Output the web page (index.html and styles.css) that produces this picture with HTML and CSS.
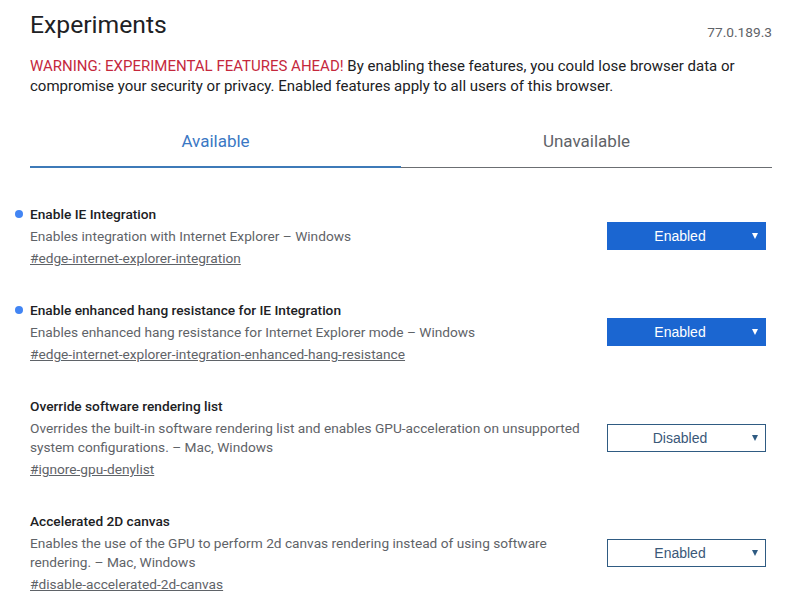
FILE: index.html
```html
<!DOCTYPE html>
<html lang="en">

<head>
    <meta charset="UTF-8">
    <meta name="viewport" content="width=device-width, initial-scale=1.0">
    <title>Experiments</title>
    <link rel="stylesheet" href="styles.css">
</head>

<body>
    <div class="page">
        <header>
            <h1>Experiments</h1>
            <span class="version">77.0.189.3</span>
        </header>

        <p class="warning"><span class="warning-label">WARNING: EXPERIMENTAL FEATURES AHEAD!</span> By enabling these features, you could lose browser data or compromise your security or privacy. Enabled features apply to all users of this browser.</p>

        <div class="tabs">
            <a href="#" class="tab active">Available</a>
            <a href="#" class="tab">Unavailable</a>
        </div>

        <div class="experiments">
            <!-- Enable IE Integration -->
            <div class="experiment">
                <div class="info">
                    <h3 class="modified">Enable IE Integration</h3>
                    <p class="desc">Enables integration with Internet Explorer – Windows</p>
                    <a href="#" class="permalink">#edge-internet-explorer-integration</a>
                </div>
                <div class="select enabled">
                    <span>Enabled</span>
                    <svg width="6" height="6" viewBox="0 0 6 6"><polygon points="0,0 6,0 3,6" /></svg>
                </div>
            </div>

            <!-- Hang resistance -->
            <div class="experiment">
                <div class="info">
                    <h3 class="modified">Enable enhanced hang resistance for IE Integration</h3>
                    <p class="desc">Enables enhanced hang resistance for Internet Explorer mode – Windows</p>
                    <a href="#" class="permalink">#edge-internet-explorer-integration-enhanced-hang-resistance</a>
                </div>
                <div class="select enabled">
                    <span>Enabled</span>
                    <svg width="6" height="6" viewBox="0 0 6 6"><polygon points="0,0 6,0 3,6" /></svg>
                </div>
            </div>

            <!-- GPU denylist -->
            <div class="experiment">
                <div class="info">
                    <h3>Override software rendering list</h3>
                    <p class="desc">Overrides the built-in software rendering list and enables GPU-acceleration on unsupported system configurations. – Mac, Windows</p>
                    <a href="#" class="permalink">#ignore-gpu-denylist</a>
                </div>
                <div class="select">
                    <span>Disabled</span>
                    <svg width="6" height="6" viewBox="0 0 6 6"><polygon points="0,0 6,0 3,6" /></svg>
                </div>
            </div>

            <!-- 2D canvas -->
            <div class="experiment">
                <div class="info">
                    <h3>Accelerated 2D canvas</h3>
                    <p class="desc">Enables the use of the GPU to perform 2d canvas rendering instead of using software rendering. – Mac, Windows</p>
                    <a href="#" class="permalink">#disable-accelerated-2d-canvas</a>
                </div>
                <div class="select">
                    <span>Enabled</span>
                    <svg width="6" height="6" viewBox="0 0 6 6"><polygon points="0,0 6,0 3,6" /></svg>
                </div>
            </div>
        </div>
    </div>
</body>

</html>
```

FILE: styles.css
```css
body {
    font-family: Roboto, "Liberation Sans", Arial, sans-serif;
    margin: 0;
    padding: 0;
    background-color: white;
    color: #202124;
}

.page {
    padding: 9px 19px 0 30px;
}

header {
    display: flex;
    justify-content: space-between;
    align-items: flex-start;
}

header h1 {
    margin: 0;
    font-size: 24.7px;
    font-weight: 400;
    line-height: 32px;
}

.version {
    font-size: 13.7px;
    color: #5f6368;
    margin-top: 15px;
}

.warning {
    margin: 15px 0 0;
    font-size: 15px;
    line-height: 20px;
    color: #202124;
}

.warning-label {
    color: #c5283d;
}

.tabs {
    display: flex;
    margin-top: 23px;
}

.tab {
    flex: 1;
    height: 48px;
    line-height: 45px;
    text-align: center;
    font-size: 17px;
    text-decoration: none;
    color: #5f6368;
    border-bottom: 1px solid #6b6e72;
}

.tab.active {
    color: #3b78c4;
    height: 47px;
    border-bottom: 2px solid #3d7ab8;
}

.experiments {
    padding-top: 36px;
    padding-right: 6px;
}

.experiment {
    display: flex;
    align-items: center;
    gap: 16px;
    margin-bottom: 32px;
}

.info {
    flex: 1;
    font-size: 13.7px;
}

.info h3 {
    margin: 0;
    font-size: 13.7px;
    font-weight: 500;
    line-height: 20px;
    color: #202124;
}

.info h3.modified::before {
    content: "";
    display: inline-block;
    width: 8px;
    height: 8px;
    border-radius: 50%;
    background-color: #4285f4;
    margin-left: -15px;
    margin-right: 7px;
    vertical-align: 1px;
}

.desc {
    margin: 3px 0 0;
    line-height: 19px;
    color: #5f6368;
}

.permalink {
    display: inline-block;
    margin-top: 3px;
    line-height: 19px;
    color: #5f6368;
}

.select {
    width: 159px;
    height: 28px;
    box-sizing: border-box;
    display: flex;
    align-items: center;
    padding-right: 7px;
    border: 1px solid #2f5b82;
    background-color: white;
    color: #3a5878;
    font-family: "Liberation Sans", Arial, sans-serif;
    font-size: 14px;
    fill: #2f5b82;
}

.select span {
    flex: 1;
    text-align: center;
}

.select.enabled {
    background-color: #1b66d1;
    border-color: #1b66d1;
    color: white;
    fill: white;
}
```
